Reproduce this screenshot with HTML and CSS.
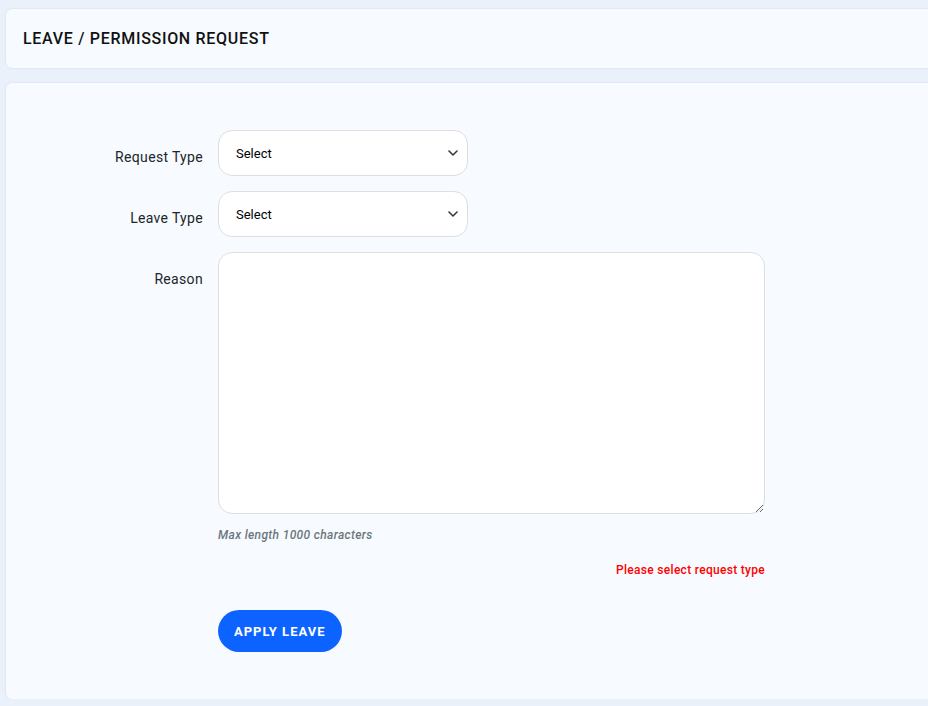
FILE: index.html
```html
<!DOCTYPE html>
<html lang="en">
<head>
<meta charset="utf-8">
<title>Leave / Permission Request</title>
<link rel="stylesheet" href="styles.css">
</head>
<body>
<div class="page">
  <div class="card card-head">
    <h1 class="title">LEAVE / PERMISSION REQUEST</h1>
  </div>
  <div class="card card-body">
    <form class="form">
      <label class="label">Request Type</label>
      <div class="select-wrap">
        <select class="select"><option>Select</option></select>
        <svg class="chev" width="10" height="6" viewBox="0 0 10 6"><path d="M1 1l4 4 4-4" fill="none" stroke="#343a40" stroke-width="1.6" stroke-linecap="round" stroke-linejoin="round"/></svg>
      </div>
      <label class="label">Leave Type</label>
      <div class="select-wrap">
        <select class="select"><option>Select</option></select>
        <svg class="chev" width="10" height="6" viewBox="0 0 10 6"><path d="M1 1l4 4 4-4" fill="none" stroke="#343a40" stroke-width="1.6" stroke-linecap="round" stroke-linejoin="round"/></svg>
      </div>
      <label class="label">Reason</label>
      <div class="reason">
        <textarea class="textarea"></textarea>
        <div class="hint">Max length 1000 characters</div>
        <div class="error">Please select request type</div>
        <button type="button" class="btn">APPLY LEAVE</button>
      </div>
    </form>
  </div>
</div>
</body>
</html>
```
FILE: styles.css
```css
html, body {
  margin: 0;
  padding: 0;
}
body {
  background: #ebf1fb;
  font-family: Roboto, "Liberation Sans", sans-serif;
  color: #212529;
  overflow: hidden;
}
.page {
  padding: 9px 0 0 6px;
  margin-right: -30px;
  display: flex;
  flex-direction: column;
  gap: 15px;
}
.card {
  background: #f7fbff;
  border-radius: 6px;
  box-shadow: 0 0 2px rgba(120, 140, 170, 0.25);
}
.card-head {
  height: 59px;
  display: flex;
  align-items: center;
  padding-left: 17px;
}
.title {
  margin: 0;
  font-size: 16px;
  font-weight: 500;
  color: #111;
  letter-spacing: 0.7px;
}
.card-body {
  height: 616px;
  box-sizing: border-box;
  padding-top: 47px;
}
.form {
  display: grid;
  grid-template-columns: 197px 547px;
  column-gap: 15px;
  row-gap: 15px;
  align-items: start;
}
.label {
  text-align: right;
  font-size: 14px;
  line-height: 21px;
  padding-top: 17px;
  color: #212529;
  letter-spacing: 0.33px;
}
.select-wrap {
  position: relative;
  width: 250px;
}
.select {
  appearance: none;
  -webkit-appearance: none;
  width: 250px;
  height: 46px;
  box-sizing: border-box;
  border: 1px solid #dedede;
  border-radius: 14px;
  background: #fff;
  padding: 0 30px 0 17px;
  font-family: Roboto, "Liberation Sans", sans-serif;
  font-size: 13px;
  color: #000;
  outline: none;
}
.chev {
  position: absolute;
  right: 10px;
  top: 20px;
  pointer-events: none;
}
.reason {
  display: flex;
  flex-direction: column;
}
.textarea {
  width: 547px;
  height: 262px;
  box-sizing: border-box;
  border: 1px solid #dedede;
  border-radius: 14px;
  background: #fff;
  resize: vertical;
  outline: none;
  margin: 0;
  display: block;
}
.hint {
  margin-top: 12px;
  font-size: 12px;
  line-height: 18px;
  font-style: italic;
  font-weight: 500;
  color: #6c757d;
  letter-spacing: 0.35px;
}
.error {
  margin-top: 17px;
  text-align: right;
  font-size: 12px;
  line-height: 18px;
  font-weight: 500;
  color: #ff0000;
  letter-spacing: 0.3px;
}
.btn {
  margin-top: 31px;
  align-self: flex-start;
  height: 42px;
  padding: 0 16px;
  border: none;
  border-radius: 21px;
  background: #0d63ff;
  color: #fff;
  font-family: Roboto, "Liberation Sans", sans-serif;
  font-size: 13px;
  font-weight: 700;
  letter-spacing: 1px;
}
```
